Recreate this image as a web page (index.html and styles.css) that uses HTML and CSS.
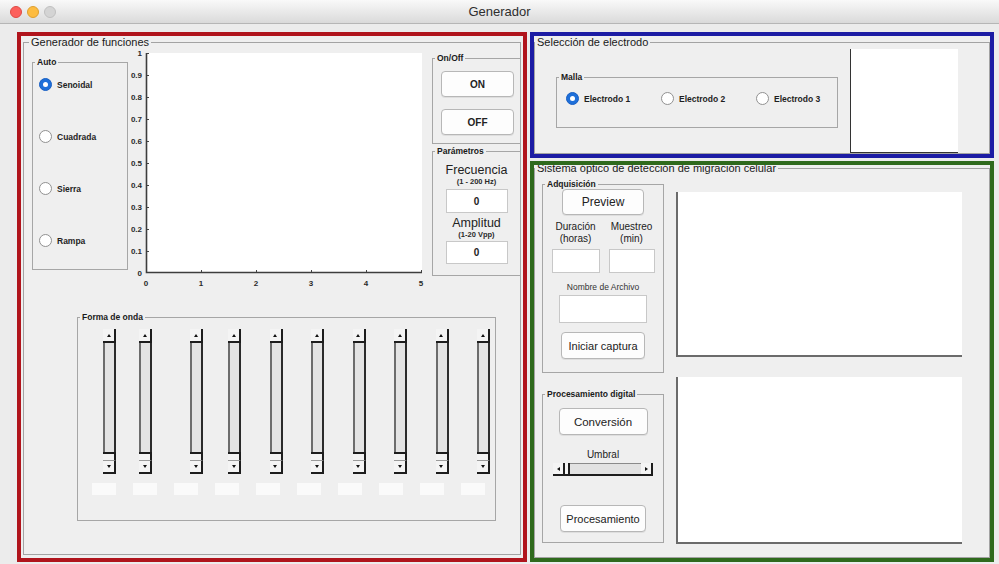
FILE: index.html
```html
<!DOCTYPE html>
<html lang="es">
<head>
<meta charset="utf-8">
<title>Generador</title>
<link rel="stylesheet" href="styles.css">
</head>
<body>
<div class="window">
  <header class="titlebar">
    <div class="lights">
      <span class="light close"></span>
      <span class="light min"></span>
      <span class="light max"></span>
    </div>
    <div class="title">Generador</div>
    <div></div>
  </header>

  <main class="figure">
    <!-- Function generator -->
    <section class="frame frame-red">
      <fieldset class="panel panel-gen">
        <legend>Generador de funciones</legend>
        <div class="gen-top">
          <fieldset class="group group-auto">
            <legend>Auto</legend>
            <div class="radio-list">
              <label class="radio-item"><span class="radio checked"></span>Senoidal</label>
              <label class="radio-item"><span class="radio"></span>Cuadrada</label>
              <label class="radio-item"><span class="radio"></span>Sierra</label>
              <label class="radio-item"><span class="radio"></span>Rampa</label>
            </div>
          </fieldset>

          <svg class="plot" width="300" height="240" viewBox="0 0 300 240">
            <rect x="18" y="4" width="276" height="220" fill="#ffffff"/>
            <g class="ticks" stroke="#444" stroke-width="1">
              <line x1="18" y1="4.5" x2="21" y2="4.5"/>
              <line x1="18" y1="26.5" x2="21" y2="26.5"/>
              <line x1="18" y1="48.5" x2="21" y2="48.5"/>
              <line x1="18" y1="70.5" x2="21" y2="70.5"/>
              <line x1="18" y1="92.5" x2="21" y2="92.5"/>
              <line x1="18" y1="114.5" x2="21" y2="114.5"/>
              <line x1="18" y1="136.5" x2="21" y2="136.5"/>
              <line x1="18" y1="158.5" x2="21" y2="158.5"/>
              <line x1="18" y1="180.5" x2="21" y2="180.5"/>
              <line x1="18" y1="202.5" x2="21" y2="202.5"/>
              <line x1="73.5" y1="224" x2="73.5" y2="221"/>
              <line x1="128.5" y1="224" x2="128.5" y2="221"/>
              <line x1="183.5" y1="224" x2="183.5" y2="221"/>
              <line x1="238.5" y1="224" x2="238.5" y2="221"/>
              <line x1="293.5" y1="224" x2="293.5" y2="221"/>
            </g>
            <path d="M18.5 4 V223.5 H294" fill="none" stroke="#3d3d3d" stroke-width="1.6"/>
            <g class="tick-labels" text-anchor="end">
              <text x="14" y="7">1</text>
              <text x="14" y="29">0.9</text>
              <text x="14" y="51">0.8</text>
              <text x="14" y="73">0.7</text>
              <text x="14" y="95">0.6</text>
              <text x="14" y="117">0.5</text>
              <text x="14" y="139">0.4</text>
              <text x="14" y="161">0.3</text>
              <text x="14" y="183">0.2</text>
              <text x="14" y="205">0.1</text>
              <text x="14" y="227">0</text>
            </g>
            <g class="tick-labels" text-anchor="middle">
              <text x="18" y="237">0</text>
              <text x="73" y="237">1</text>
              <text x="128" y="237">2</text>
              <text x="183" y="237">3</text>
              <text x="238" y="237">4</text>
              <text x="293" y="237">5</text>
            </g>
          </svg>

          <div class="side">
            <fieldset class="group group-onoff">
              <legend>On/Off</legend>
              <button class="btn btn-on" type="button">ON</button>
              <button class="btn btn-off" type="button">OFF</button>
            </fieldset>
            <fieldset class="group group-params">
              <legend>Parámetros</legend>
              <div class="params-body">
                <div class="param-title">Frecuencia</div>
                <div class="param-sub">(1 - 200 Hz)</div>
                <input class="field field-param" type="text" value="0">
                <div class="param-title param-gap">Amplitud</div>
                <div class="param-sub">(1-20 Vpp)</div>
                <input class="field field-param field-amp" type="text" value="0">
              </div>
            </fieldset>
          </div>
        </div>

        <fieldset class="group group-wave">
          <legend>Forma de onda</legend>
          <div class="sliders">
            <div class="vslider"><span class="arrow up"></span><span class="track"></span><span class="thumb"></span><span class="arrow down"></span></div>
            <div class="vslider"><span class="arrow up"></span><span class="track"></span><span class="thumb"></span><span class="arrow down"></span></div>
            <div class="vslider"><span class="arrow up"></span><span class="track"></span><span class="thumb"></span><span class="arrow down"></span></div>
            <div class="vslider"><span class="arrow up"></span><span class="track"></span><span class="thumb"></span><span class="arrow down"></span></div>
            <div class="vslider"><span class="arrow up"></span><span class="track"></span><span class="thumb"></span><span class="arrow down"></span></div>
            <div class="vslider"><span class="arrow up"></span><span class="track"></span><span class="thumb"></span><span class="arrow down"></span></div>
            <div class="vslider"><span class="arrow up"></span><span class="track"></span><span class="thumb"></span><span class="arrow down"></span></div>
            <div class="vslider"><span class="arrow up"></span><span class="track"></span><span class="thumb"></span><span class="arrow down"></span></div>
            <div class="vslider"><span class="arrow up"></span><span class="track"></span><span class="thumb"></span><span class="arrow down"></span></div>
            <div class="vslider"><span class="arrow up"></span><span class="track"></span><span class="thumb"></span><span class="arrow down"></span></div>
          </div>
          <div class="values">
            <span class="value-box"></span><span class="value-box"></span><span class="value-box"></span><span class="value-box"></span><span class="value-box"></span>
            <span class="value-box"></span><span class="value-box"></span><span class="value-box"></span><span class="value-box"></span><span class="value-box"></span>
          </div>
        </fieldset>
      </fieldset>
    </section>

    <div class="right-col">
      <!-- Electrode selection -->
      <section class="frame frame-blue">
        <fieldset class="panel panel-sel">
          <legend>Selección de electrodo</legend>
          <div class="sel-row">
            <fieldset class="group group-malla">
              <legend>Malla</legend>
              <div class="radio-row">
                <label class="radio-item radio-wide"><span class="radio checked"></span>Electrodo 1</label>
                <label class="radio-item radio-wide"><span class="radio"></span>Electrodo 2</label>
                <label class="radio-item radio-wide"><span class="radio"></span>Electrodo 3</label>
              </div>
            </fieldset>
            <div class="axes axes-small"></div>
          </div>
        </fieldset>
      </section>

      <!-- Optical cell migration system -->
      <section class="frame frame-green">
        <fieldset class="panel panel-sys">
          <legend>Sistema óptico de detección de migración celular</legend>
          <div class="sys-row">
            <div class="sys-controls">
              <fieldset class="group group-acq">
                <legend>Adquisición</legend>
                <div class="group-body">
                  <button class="btn btn-preview" type="button">Preview</button>
                  <div class="dur-grid">
                    <div class="dur-label">Duración<br>(horas)</div>
                    <div class="dur-label">Muestreo<br>(min)</div>
                    <input class="field" type="text" value="">
                    <input class="field" type="text" value="">
                  </div>
                  <div class="file-label">Nombre de Archivo</div>
                  <input class="field field-file" type="text" value="">
                  <button class="btn btn-capture" type="button">Iniciar captura</button>
                </div>
              </fieldset>
              <fieldset class="group group-proc">
                <legend>Procesamiento digital</legend>
                <div class="group-body">
                  <button class="btn btn-convert" type="button">Conversión</button>
                  <div class="umbral-label">Umbral</div>
                  <div class="hslider">
                    <span class="harrow left"></span>
                    <span class="hthumb"></span>
                    <span class="htrack"></span>
                    <span class="harrow right"></span>
                  </div>
                  <button class="btn btn-process" type="button">Procesamiento</button>
                </div>
              </fieldset>
            </div>
            <div class="sys-views">
              <div class="axes axes-view"></div>
              <div class="axes axes-view axes-view-2"></div>
            </div>
          </div>
        </fieldset>
      </section>
    </div>
  </main>
</div>
</body>
</html>
```

FILE: styles.css
```css
* { box-sizing: border-box; }

html, body { margin: 0; padding: 0; }

body {
  width: 999px;
  height: 564px;
  overflow: hidden;
  background: #ececec;
  font-family: "Liberation Sans", Arial, sans-serif;
  color: #1b1b1b;
}

/* ---------- window title bar ---------- */
.titlebar {
  height: 24px;
  display: grid;
  grid-template-columns: 1fr auto 1fr;
  align-items: center;
  background: linear-gradient(#f9f9f9, #dadada);
  border-bottom: 1px solid #b6b6b6;
}
.lights { display: flex; gap: 5px; padding-left: 10px; }
.light { width: 12px; height: 12px; border-radius: 50%; }
.close { background: #fc605c; border: 1px solid #df4a44; }
.min { background: #fdbc40; border: 1px solid #de9f2f; }
.max { background: #d4d4d4; border: 1px solid #c0c0c0; }
.title { font-size: 13px; color: #2e2e2e; }

/* ---------- figure layout ---------- */
.figure {
  display: flex;
  gap: 3px;
  padding: 8px 0 0 17px;
}
.frame {
  border: 4px solid;
  background: #efefef;
  overflow: hidden;
}
.frame-red { width: 510px; height: 530px; flex: none; border-color: #b0141c; }
.right-col { display: flex; flex-direction: column; gap: 3px; width: 464px; flex: none; }
.frame-blue { height: 126px; border-color: #1c1ca4; }
.frame-green { height: 401px; border-color: #2f6a1d; }

/* ---------- panels and button groups ---------- */
.panel, .group {
  margin: 0;
  padding: 0;
  min-width: 0;
}
.panel { border: 1px solid #a3a3a3; }
.panel > legend {
  font-size: 11px;
  line-height: 13px;
  padding: 0 2px;
  margin-left: 0;
  color: #1a1a1a;
}
.group { border: 1px solid #a6a6a6; flex: none; }
.group > legend {
  font-size: 8.5px;
  font-weight: bold;
  line-height: 10px;
  padding: 0 2px;
  margin-left: 2px;
  color: #1a1a1a;
}

/* ---------- generator panel ---------- */
.panel-gen { margin: 0 2px 2px; height: 519px; }
.panel-gen > legend { margin-left: 5px; }

.gen-top { display: flex; align-items: flex-start; }

.group-auto { margin: 8px 0 0 8px; width: 96px; height: 213px; }
.radio-list {
  display: flex;
  flex-direction: column;
  gap: 39px;
  padding: 11px 0 0 6px;
}
.radio-item {
  display: flex;
  align-items: center;
  gap: 5px;
  height: 13px;
  font-size: 8.5px;
  font-weight: bold;
  color: #1e1e1e;
}
.radio {
  width: 13px;
  height: 13px;
  flex: none;
  border-radius: 50%;
  border: 1px solid #919191;
  background: #fff;
  display: grid;
  place-items: center;
}
.radio.checked { background: #1e6fd9; border-color: #185fc4; }
.radio.checked::after {
  content: "";
  width: 5px;
  height: 5px;
  border-radius: 50%;
  background: #fff;
}

.plot { display: block; flex: none; }
.tick-labels text {
  font-family: "Liberation Sans", Arial, sans-serif;
  font-size: 8px;
  font-weight: bold;
  fill: #2a2a2a;
}

.side { display: flex; flex-direction: column; margin: 4px 0 0 4px; width: 89px; flex: none; }
.group-onoff { height: 91px; }
.group-params { margin-top: 2px; height: 130px; }
.params-body { text-align: center; }

.btn {
  display: block;
  padding: 0;
  font-family: "Liberation Sans", Arial, sans-serif;
  color: #222;
  background: #fdfdfd;
  border: 1px solid #b7b7b7;
  border-radius: 4px;
  box-shadow: 0 1px 0 rgba(0, 0, 0, 0.07);
}
.btn-on, .btn-off {
  width: 73px;
  height: 26px;
  margin-left: 8px;
  font-size: 10px;
  font-weight: bold;
}
.btn-on { margin-top: 8px; }
.btn-off { margin-top: 12px; }

.param-title { margin-top: 8px; font-size: 12.5px; line-height: 13px; color: #222; }
.param-title.param-gap { margin-top: 4px; }
.param-sub { font-size: 7.5px; font-weight: bold; line-height: 9px; color: #2a2a2a; }

.field {
  display: block;
  margin: 0;
  padding: 0;
  background: #fff;
  border: 1px solid #c8c8c8;
  font-family: "Liberation Sans", Arial, sans-serif;
  font-size: 10px;
  font-weight: bold;
  color: #222;
  text-align: center;
  outline: none;
}
.field-param { width: 62px; height: 24px; margin: 3px auto 0; }
.field-param.field-amp { height: 23px; margin-top: 2px; }

/* waveform sliders */
.group-wave { margin: 23px 0 0 53px; width: 419px; height: 209px; }
.sliders { display: flex; padding: 7px 0 0 25px; }
.vslider {
  width: 13px;
  height: 145px;
  flex: none;
  display: flex;
  flex-direction: column;
}
.vslider + .vslider { margin-left: 28.5px; }
.vslider:nth-child(2) { margin-left: 23px; }
.vslider:nth-child(3) { margin-left: 38px; }
.vslider:nth-child(4) { margin-left: 25px; }

.arrow {
  height: 14px;
  flex: none;
  display: flex;
  align-items: center;
  justify-content: center;
  background: #f4f4f4;
  border-right: 2px solid #1d1d1d;
  border-bottom: 2px solid #1d1d1d;
}
.arrow::after {
  content: "";
  border-left: 2px solid transparent;
  border-right: 2px solid transparent;
}
.arrow.up::after { border-bottom: 3px solid #111; }
.arrow.down::after { border-top: 3px solid #111; }
.arrow.down { border-top: 1px solid #9a9a9a; }
.track {
  flex: 1;
  background: #e3e3e3;
  border-left: 2px solid #6c6c6c;
  border-right: 2px solid #2b2b2b;
}
.thumb {
  height: 8px;
  flex: none;
  background: #f3f3f3;
  border-top: 2px solid #1d1d1d;
  border-right: 2px solid #1d1d1d;
}

.values { display: flex; gap: 17px; padding: 9px 0 0 14px; }
.value-box { width: 24px; height: 12px; background: #fafafa; }

/* ---------- electrode selection panel ---------- */
.panel-sel { height: 118px; }
.sel-row { display: flex; align-items: flex-start; }
.group-malla { margin: 23px 0 0 21px; width: 282px; height: 56px; }
.radio-row { display: flex; padding: 10px 0 0 9px; }
.radio-wide { width: 95px; flex: none; }

.axes { background: #fff; flex: none; }
.axes-small {
  margin-left: 12px;
  width: 108px;
  height: 104px;
  border-left: 1px solid #333;
  border-bottom: 1px solid #333;
}

/* ---------- optical system panel ---------- */
.panel-sys { margin-top: -3px; height: 396px; }
.sys-row { display: flex; align-items: flex-start; }
.sys-controls { display: flex; flex-direction: column; margin-left: 7px; flex: none; }

.group-acq, .group-proc { width: 122px; }
.group-acq { margin-top: 4px; height: 194px; }
.group-proc { margin-top: 16px; height: 154px; }
.group-body {
  display: flex;
  flex-direction: column;
  align-items: center;
}

.btn-preview { width: 82px; height: 26px; font-size: 12px; }
.dur-grid {
  display: grid;
  grid-template-columns: 48px 46px;
  column-gap: 9px;
  row-gap: 4px;
  margin-top: 6px;
  text-align: center;
}
.dur-label { font-size: 10px; line-height: 12px; color: #222; }
.dur-grid .field { width: 100%; height: 24px; }

.file-label { margin-top: 9px; font-size: 8.5px; line-height: 10px; color: #333; }
.field-file { width: 88px; height: 28px; margin-top: 3px; }
.btn-capture { width: 84px; height: 27px; margin-top: 9px; font-size: 11px; }

.btn-convert { width: 89px; height: 27px; margin-top: 9px; font-size: 11.5px; }
.umbral-label { margin-top: 15px; font-size: 10px; line-height: 10px; color: #222; }
.hslider {
  width: 100px;
  height: 13px;
  margin-top: 3px;
  display: flex;
  border-bottom: 2px solid #1d1d1d;
}
.harrow {
  width: 12px;
  flex: none;
  display: flex;
  align-items: center;
  justify-content: center;
  background: #f4f4f4;
  border-right: 2px solid #1d1d1d;
}
.harrow::after {
  content: "";
  border-top: 2px solid transparent;
  border-bottom: 2px solid transparent;
}
.harrow.left::after { border-right: 3px solid #111; }
.harrow.right::after { border-left: 3px solid #111; }
.hthumb { width: 5px; flex: none; background: #f4f4f4; border-right: 2px solid #1d1d1d; }
.htrack { flex: 1; background: #e2e2e2; border-top: 1px solid #8a8a8a; }
.btn-process { width: 86px; height: 27px; margin-top: 29px; font-size: 11px; }

.sys-views { display: flex; flex-direction: column; margin-left: 12px; }
.axes-view {
  width: 286px;
  height: 165px;
  margin-top: 17px;
  border-left: 2px solid #6b6b6b;
  border-bottom: 2px solid #6b6b6b;
}
.axes-view.axes-view-2 { height: 167px; margin-top: 20px; }
```
